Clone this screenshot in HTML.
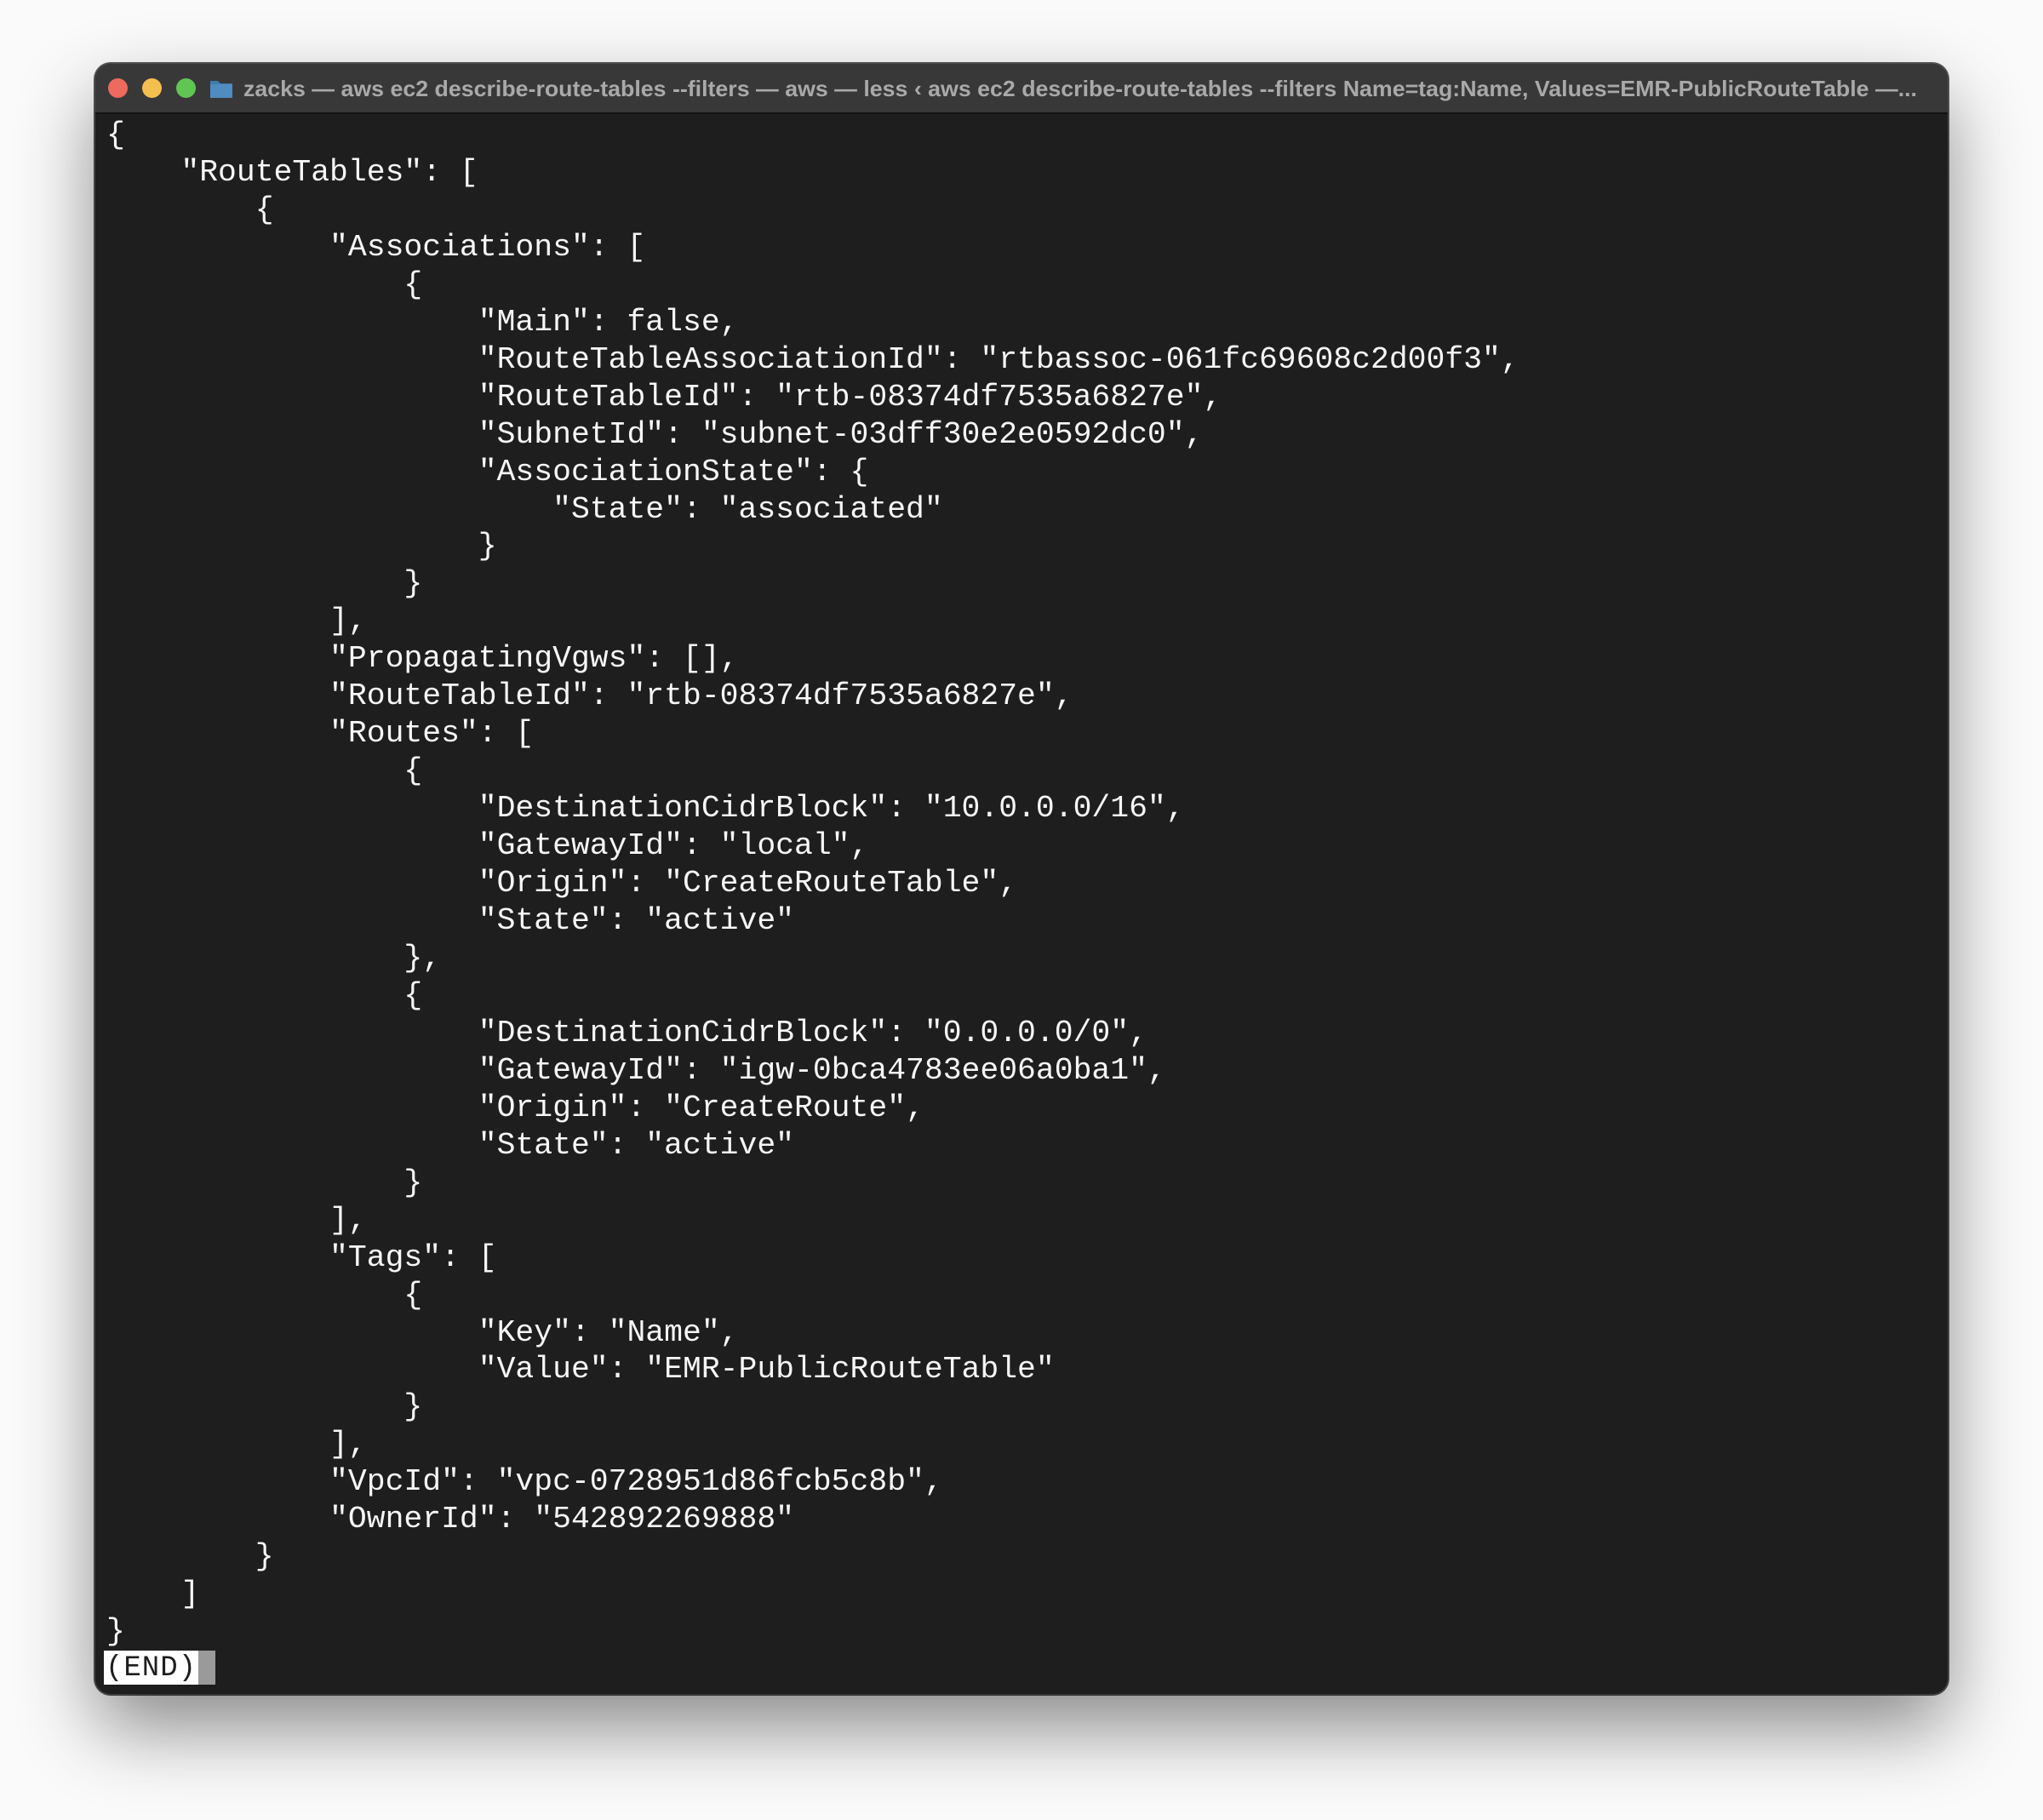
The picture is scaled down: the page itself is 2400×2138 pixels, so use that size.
<!DOCTYPE html>
<html><head><meta charset="utf-8"><style>
html,body{margin:0;padding:0;}
body{width:2400px;height:2138px;background:#fafafa;position:relative;overflow:hidden;}
.win{position:absolute;left:112px;top:75px;width:2176px;height:1915px;border-radius:18px;background:#1e1e1e;
box-shadow:0 40px 90px rgba(0,0,0,0.45),0 0 0 2px #555;overflow:hidden;}
.tb{position:absolute;left:0;top:0;width:100%;height:57px;background:#383838;border-bottom:2px solid #111;}
.dot{position:absolute;top:17px;width:23px;height:23px;border-radius:50%;}
pre{position:absolute;left:13px;top:62px;margin:0;font-family:"Liberation Mono",monospace;font-size:36.4px;line-height:43.95px;color:#f6f6f6;}
.end{position:absolute;left:10px;top:1864px;width:111px;height:40px;background:#fff;color:#1e1e1e;font-family:"Liberation Mono",monospace;font-size:34px;line-height:42px;text-align:center;letter-spacing:1px;}
.cur{position:absolute;left:121px;top:1864px;width:20px;height:40px;background:#9a9a9a;}
</style></head><body>
<div class="win">
<div class="tb">
<div class="dot" style="left:15px;background:#ed6a5e"></div>
<div class="dot" style="left:55px;background:#f5bf4f"></div>
<div class="dot" style="left:95px;background:#61c554"></div>
<svg style="position:absolute;left:134px;top:17px" width="28" height="24"><path d="M1 3h9l3 3h14v17H1z" fill="#3f7bab"/><rect x="1" y="7" width="26" height="16" fill="#4f8cbf"/></svg>
<svg style="position:absolute;left:174px;top:8px" width="1970" height="42"><text x="0" y="30" textLength="1966" lengthAdjust="spacingAndGlyphs" font-family="Liberation Sans, sans-serif" font-weight="bold" font-size="26" fill="#a9a9a9">zacks — aws ec2 describe-route-tables --filters  — aws — less ‹ aws ec2 describe-route-tables --filters Name=tag:Name, Values=EMR-PublicRouteTable —...</text></svg>
</div>
<pre>{
    "RouteTables": [
        {
            "Associations": [
                {
                    "Main": false,
                    "RouteTableAssociationId": "rtbassoc-061fc69608c2d00f3",
                    "RouteTableId": "rtb-08374df7535a6827e",
                    "SubnetId": "subnet-03dff30e2e0592dc0",
                    "AssociationState": {
                        "State": "associated"
                    }
                }
            ],
            "PropagatingVgws": [],
            "RouteTableId": "rtb-08374df7535a6827e",
            "Routes": [
                {
                    "DestinationCidrBlock": "10.0.0.0/16",
                    "GatewayId": "local",
                    "Origin": "CreateRouteTable",
                    "State": "active"
                },
                {
                    "DestinationCidrBlock": "0.0.0.0/0",
                    "GatewayId": "igw-0bca4783ee06a0ba1",
                    "Origin": "CreateRoute",
                    "State": "active"
                }
            ],
            "Tags": [
                {
                    "Key": "Name",
                    "Value": "EMR-PublicRouteTable"
                }
            ],
            "VpcId": "vpc-0728951d86fcb5c8b",
            "OwnerId": "542892269888"
        }
    ]
}</pre>
<div class="end">(END)</div><div class="cur"></div>
</div>
</body></html>
